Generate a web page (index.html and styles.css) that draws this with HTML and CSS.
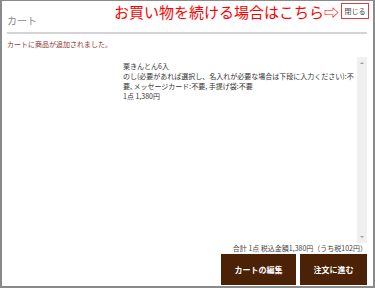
FILE: index.html
```html
<!DOCTYPE html>
<html lang="ja">
<head>
  <meta charset="UTF-8">
  <title>カート</title>
  <link rel="stylesheet" href="styles.css">
</head>
<body>

<div class="modal">
  <p class="notice">お買い物を続ける場合はこちら⇨</p>
  <button class="close" type="button">閉じる</button>

  <h2 class="title">カート</h2>
  <p class="message">カートに商品が追加されました。</p>

  <div class="items">
    <div class="items-body">
      <div class="item">
        <div>栗きんとん6入</div>
        <div>のし(必要があれば選択し、名入れが必要な場合は下段に入力ください):不要, メッセージカード:不要, 手提げ袋:不要</div>
        <div>1点 1,380円</div>
      </div>
    </div>
    <div class="scrollbar">
      <span class="arrow up"></span>
      <span class="arrow down"></span>
    </div>
  </div>

  <p class="total">合計 1点 税込金額1,380円（うち税102円）</p>

  <div class="actions">
    <button type="button" class="btn btn-edit">カートの編集</button>
    <button type="button" class="btn btn-order">注文に進む</button>
  </div>
</div>

</body>
</html>
```

FILE: styles.css
```css
body {
  margin: 0;
  padding: 0;
  background: #fff;
  font-family: "Noto Sans CJK JP", "Noto Sans", sans-serif;
  color: #333;
}
.modal {
  position: relative;
  box-sizing: border-box;
  width: 375px;
  height: 288px;
  border: 2px solid #8a8a8a;
  border-top-width: 1px;
  padding: 0 6px 1px 5px;
  display: flex;
  flex-direction: column;
}
.notice {
  position: absolute;
  top: 1px;
  left: 112px;
  margin: 0;
  font-size: 15px;
  line-height: 20px;
  color: #f00;
}
.close {
  position: absolute;
  top: 2px;
  right: 4px;
  width: 28px;
  height: 16px;
  padding: 0;
  background: #fff;
  border: 1px solid #e43a3a;
  font-family: inherit;
  font-size: 7px;
  color: #444;
}
.title {
  margin: 13px 0 0;
  padding-bottom: 4px;
  border-bottom: 2px solid #d4d4d4;
  font-size: 10px;
  line-height: 14px;
  font-weight: normal;
  color: #888;
}
.message {
  margin: 5px 0 0;
  font-size: 7px;
  line-height: 10px;
  color: #8e3535;
}
.items {
  margin-top: 8px;
  height: 186px;
  display: flex;
}
.items-body {
  flex: 1;
  padding: 4px 0 0 116px;
}
.item {
  width: 234px;
  font-size: 7px;
  line-height: 10px;
  color: #333;
}
.scrollbar {
  width: 10px;
  background: #f0f0f0;
  display: flex;
  flex-direction: column;
  justify-content: space-between;
  align-items: center;
  padding: 5px 0;
  box-sizing: border-box;
}
.arrow {
  width: 0;
  height: 0;
  border-left: 2px solid transparent;
  border-right: 2px solid transparent;
}
.arrow.up {
  border-bottom: 2px solid #a0a0a0;
}
.arrow.down {
  border-top: 2px solid #a0a0a0;
}
.total {
  margin: 0;
  text-align: right;
  font-size: 7px;
  line-height: 11px;
  color: #444;
}
.actions {
  display: flex;
  justify-content: flex-end;
  gap: 4px;
}
.btn {
  height: 31px;
  border: none;
  background: #4b2205;
  color: #fff;
  font-family: inherit;
  font-size: 8px;
  font-weight: bold;
  padding: 0;
}
.btn-edit {
  width: 75px;
}
.btn-order {
  width: 67px;
}
```
